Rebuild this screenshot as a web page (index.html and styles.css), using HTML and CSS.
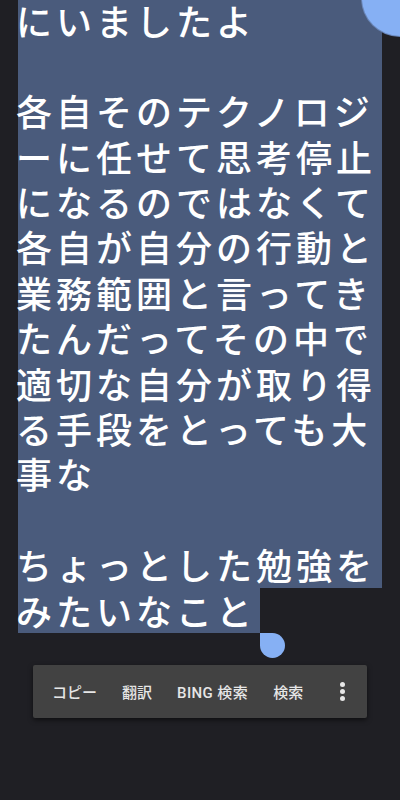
FILE: index.html
```html
<!DOCTYPE html>
<html lang="ja">
<head>
<meta charset="utf-8">
<title>選択</title>
<link rel="stylesheet" href="styles.css">
</head>
<body>
<div class="screen">
  <div class="text">
    <div class="sel">
      <div class="line">にいましたよ</div>
      <div class="line"></div>
      <div class="line">各自そのテクノロジ</div>
      <div class="line">ーに任せて思考停止</div>
      <div class="line">になるのではなくて</div>
      <div class="line">各自が自分の行動と</div>
      <div class="line">業務範囲と言ってき</div>
      <div class="line">たんだってその中で</div>
      <div class="line">適切な自分が取り得</div>
      <div class="line">る手段をとっても大</div>
      <div class="line">事な</div>
      <div class="line"></div>
      <div class="line">ちょっとした勉強を</div>
    </div>
    <div class="sel last">
      <div class="line">みたいなこと</div>
    </div>
    <div class="handle-end"></div>
  </div>
  <div class="toolbar">
    <span class="item">コピー</span>
    <span class="item">翻訳</span>
    <span class="item wide">BING 検索</span>
    <span class="item">検索</span>
    <span class="more"><i></i><i></i><i></i></span>
  </div>
  <div class="handle-start"></div>
</div>
</body>
</html>
```

FILE: styles.css
```css
html, body {
  margin: 0;
  padding: 0;
  background: #1f1f24;
}
.screen {
  position: relative;
  width: 400px;
  height: 800px;
  overflow: hidden;
  background: #1f1f24;
}
.text {
  margin-top: -2.5px;
  margin-left: 18px;
  width: 364px;
  font-family: "Noto Sans CJK JP", "Noto Sans", sans-serif;
  font-size: 36px;
  font-weight: 500;
  letter-spacing: 4px;
  color: #ffffff;
}
.sel {
  background: #4a5b7c;
}
.sel.last {
  width: 242px;
}
.line {
  height: 45.4px;
  line-height: 45.4px;
  text-indent: -2px;
  white-space: nowrap;
}
.handle-end {
  margin-left: 242px;
  width: 25px;
  height: 25px;
  background: #86b0f4;
  border-radius: 0 50% 50% 50%;
}
.handle-start {
  position: absolute;
  left: 362px;
  top: -40px;
  width: 76px;
  height: 76px;
  border-radius: 50%;
  background: #86b0f4;
  box-shadow: 0 0 0 1px #6a86b8;
}
.toolbar {
  margin: 7px 0 0 33px;
  width: 334px;
  height: 53px;
  box-sizing: border-box;
  padding: 0 22px 0 19px;
  display: flex;
  align-items: center;
  gap: 25px;
  background: #424242;
  border-radius: 2px;
  box-shadow: 0 2px 5px rgba(0, 0, 0, 0.55);
  font-family: Roboto, "Noto Sans CJK JP", sans-serif;
  font-size: 15px;
  font-weight: 500;
  color: #e6e6e6;
}
.item {
  white-space: nowrap;
}
.item.wide {
  letter-spacing: 0.4px;
}
.more {
  margin-left: auto;
  display: flex;
  flex-direction: column;
  gap: 2px;
}
.more i {
  display: block;
  width: 5px;
  height: 5px;
  border-radius: 50%;
  background: #e6e6e6;
}
```
